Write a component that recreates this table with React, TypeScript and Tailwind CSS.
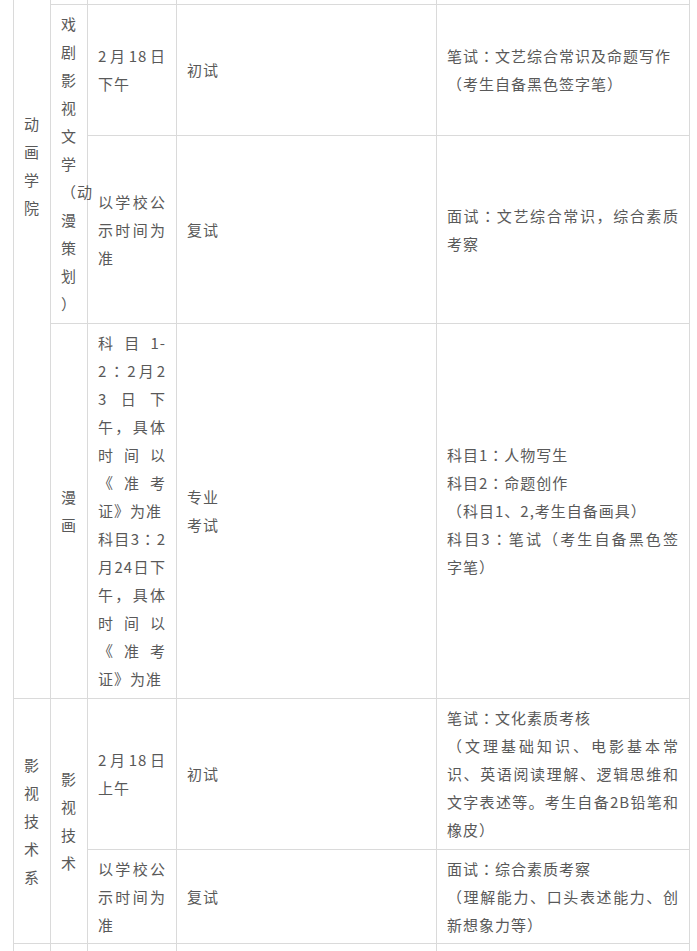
import React from "react";

const cell =
  "bg-white flex items-center px-[10px] text-[15px] leading-[28px] tracking-[1px] text-[#595959] text-justify";

function T({ s }: { s: string }) {
  const parts = s.split("：");
  return (
    <>
      {parts.map((p, i) => (
        <React.Fragment key={i}>
          {i > 0 && (
            <span style={{ fontFamily: '"Noto Sans CJK TC", "Noto Sans CJK SC", sans-serif' }}>：</span>
          )}
          {p}
        </React.Fragment>
      ))}
    </>
  );
}

export default function App() {
  const col2Lines = ["戏", "剧", "影", "视", "文", "学", "（动", "漫", "策", "划", "）"];
  return (
    <div
      className="h-[951px] w-[697px] overflow-hidden bg-white"
      style={{ fontFamily: '"Noto Sans CJK SC", "Noto Sans", sans-serif' }}
    >
      <div className="ml-[13px] -mt-[368px] w-[677px] grid grid-cols-[36px_36px_88px_259px_252px] grid-rows-[371px_130px_187px_374px_150px_93px_40px] gap-px p-px bg-[#dadada]">
        {/* column 1 */}
        <div className={`${cell} col-start-1 row-start-1 row-span-4`}>
          <div className="w-full break-all">动画学院</div>
        </div>
        <div className={`${cell} col-start-1 row-start-5 row-span-2`}>
          <div className="w-full break-all">影视技术系</div>
        </div>
        <div className={`${cell} col-start-1 row-start-7`} />

        {/* hidden top row */}
        <div className={`${cell} col-start-2 row-start-1`} />
        <div className={`${cell} col-start-3 row-start-1`} />
        <div className={`${cell} col-start-4 row-start-1`} />
        <div className={`${cell} col-start-5 row-start-1`} />

        {/* 戏剧影视文学 */}
        <div className={`${cell} col-start-2 row-start-2 row-span-2 relative z-10`}>
          <div className="w-full">
            {col2Lines.map((l, i) => (
              <div key={i} className="whitespace-nowrap">
                {l}
              </div>
            ))}
          </div>
        </div>
        <div className={`${cell} col-start-3 row-start-2`}>
          <div className="w-full break-all">2月18日下午</div>
        </div>
        <div className={`${cell} col-start-4 row-start-2`}>
          <div className="w-full">初试</div>
        </div>
        <div className={`${cell} col-start-5 row-start-2`}>
          <div className="w-full">
            <div>
              <T s="笔试：文艺综合常识及命题写作" />
            </div>
            <div>（考生自备黑色签字笔）</div>
          </div>
        </div>

        <div className={`${cell} col-start-3 row-start-3`}>
          <div className="w-full break-all">以学校公示时间为准</div>
        </div>
        <div className={`${cell} col-start-4 row-start-3`}>
          <div className="w-full">复试</div>
        </div>
        <div className={`${cell} col-start-5 row-start-3`}>
          <div className="w-full">
            <T s="面试：文艺综合常识，综合素质考察" />
          </div>
        </div>

        {/* 漫画 */}
        <div className={`${cell} col-start-2 row-start-4`}>
          <div className="w-full">漫画</div>
        </div>
        <div className={`${cell} col-start-3 row-start-4`}>
          <div className="w-full break-all">
            <div>
              <T s="科目1-2：2月23日下午，具体时间以《准考证》为准" />
            </div>
            <div>
              <T s="科目3：2月24日下午，具体时间以《准考证》为准" />
            </div>
          </div>
        </div>
        <div className={`${cell} col-start-4 row-start-4`}>
          <div className="w-full">
            专业
            <br />
            考试
          </div>
        </div>
        <div className={`${cell} col-start-5 row-start-4`}>
          <div className="w-full">
            <div>
              <T s="科目1：人物写生" />
            </div>
            <div>
              <T s="科目2：命题创作" />
            </div>
            <div>（科目1、2,考生自备画具）</div>
            <div>
              <T s="科目3：笔试（考生自备黑色签字笔）" />
            </div>
          </div>
        </div>

        {/* 影视技术 */}
        <div className={`${cell} col-start-2 row-start-5 row-span-2`}>
          <div className="w-full">影视技术</div>
        </div>
        <div className={`${cell} col-start-3 row-start-5`}>
          <div className="w-full break-all">2月18日上午</div>
        </div>
        <div className={`${cell} col-start-4 row-start-5`}>
          <div className="w-full">初试</div>
        </div>
        <div className={`${cell} col-start-5 row-start-5`}>
          <div className="w-full">
            <div>
              <T s="笔试：文化素质考核" />
            </div>
            <div>（文理基础知识、电影基本常识、英语阅读理解、逻辑思维和文字表述等。考生自备2B铅笔和橡皮）</div>
          </div>
        </div>

        <div className={`${cell} col-start-3 row-start-6`}>
          <div className="w-full break-all">以学校公示时间为准</div>
        </div>
        <div className={`${cell} col-start-4 row-start-6`}>
          <div className="w-full">复试</div>
        </div>
        <div className={`${cell} col-start-5 row-start-6`}>
          <div className="w-full">
            <div>
              <T s="面试：综合素质考察" />
            </div>
            <div>（理解能力、口头表述能力、创新想象力等）</div>
          </div>
        </div>

        {/* next group start */}
        <div className={`${cell} col-start-2 row-start-7`} />
        <div className={`${cell} col-start-3 row-start-7`} />
        <div className={`${cell} col-start-4 row-start-7`} />
        <div className={`${cell} col-start-5 row-start-7`} />
      </div>
    </div>
  );
}
